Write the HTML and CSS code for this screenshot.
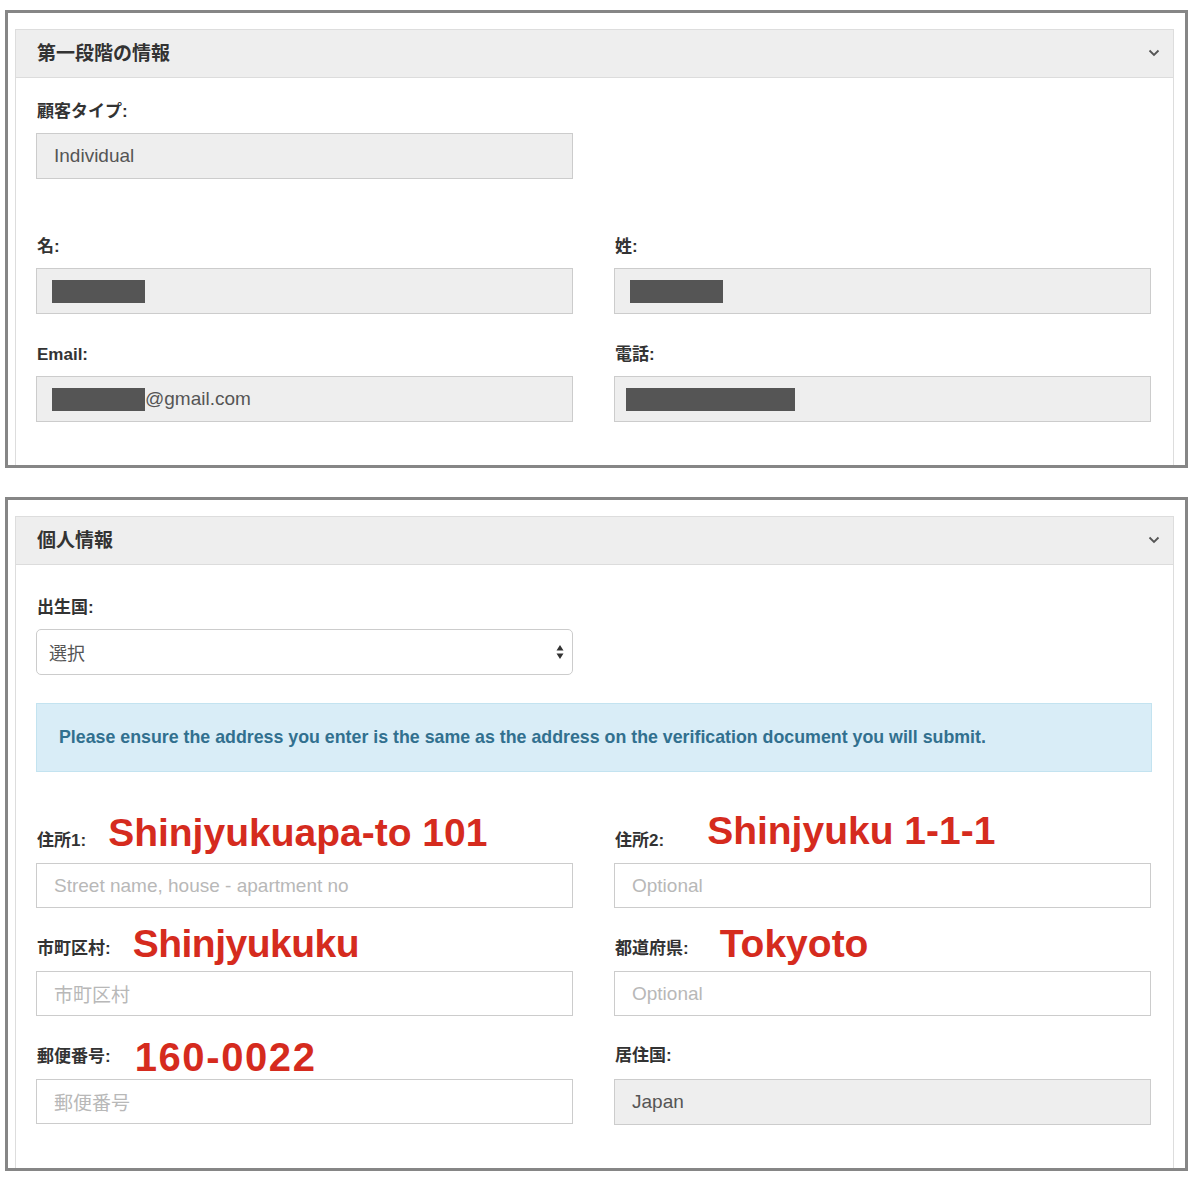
FILE: index.html
```html
<!DOCTYPE html>
<html lang="ja">
<head>
<meta charset="utf-8">
<link rel="stylesheet" href="styles.css">
</head>
<body>
<div class="page">
  <div class="frame frame-1">
    <div class="panel">
      <div class="panel-head">
        <span class="panel-title">第一段階の情報</span>
        <svg class="chev" width="12" height="8" viewBox="0 0 12 8"><path d="M1.5 1.5 L6 6 L10.5 1.5" fill="none" stroke="#555" stroke-width="1.8"/></svg>
      </div>
      <div class="panel-body body-1">
        <div class="grid">
          <div class="group group-first">
            <div class="label">顧客タイプ:</div>
            <div class="field readonly">Individual</div>
          </div>
          <div></div>
          <div class="group">
            <div class="label">名:</div>
            <div class="field readonly"><span class="redact redact-a"></span></div>
          </div>
          <div class="group">
            <div class="label">姓:</div>
            <div class="field readonly"><span class="redact redact-a"></span></div>
          </div>
          <div class="group">
            <div class="label">Email:</div>
            <div class="field readonly"><span class="redact redact-a"></span>@gmail.com</div>
          </div>
          <div class="group">
            <div class="label">電話:</div>
            <div class="field readonly"><span class="redact redact-b"></span></div>
          </div>
        </div>
      </div>
    </div>
  </div>

  <div class="frame frame-2">
    <div class="panel">
      <div class="panel-head">
        <span class="panel-title">個人情報</span>
        <svg class="chev" width="12" height="8" viewBox="0 0 12 8"><path d="M1.5 1.5 L6 6 L10.5 1.5" fill="none" stroke="#555" stroke-width="1.8"/></svg>
      </div>
      <div class="panel-body body-2">
        <div class="group half">
          <div class="label">出生国:</div>
          <div class="field select">
            <span>選択</span>
            <svg class="updown" width="8" height="16" viewBox="0 0 8 16"><path d="M4 1 L7.5 6.5 L0.5 6.5 Z M4 15 L7.5 9.5 L0.5 9.5 Z" fill="#333"/></svg>
          </div>
        </div>
        <div class="alert">Please ensure the address you enter is the same as the address on the verification document you will submit.</div>
        <div class="addr-grid">
          <div class="agroup">
            <div class="arow"><span class="slabel">住所1:</span><span class="red red-1">Shinjyukuapa-to 101</span></div>
            <div class="field plain ph">Street name, house - apartment no</div>
          </div>
          <div class="agroup">
            <div class="arow"><span class="slabel">住所2:</span><span class="red red-2">Shinjyuku 1-1-1</span></div>
            <div class="field plain ph">Optional</div>
          </div>
          <div class="agroup">
            <div class="arow"><span class="slabel">市町区村:</span><span class="red red-3">Shinjyukuku</span></div>
            <div class="field plain ph">市町区村</div>
          </div>
          <div class="agroup">
            <div class="arow"><span class="slabel">都道府県:</span><span class="red red-4">Tokyoto</span></div>
            <div class="field plain ph">Optional</div>
          </div>
          <div class="agroup">
            <div class="arow"><span class="slabel">郵便番号:</span><span class="red red-5">160-0022</span></div>
            <div class="field plain ph">郵便番号</div>
          </div>
          <div class="agroup">
            <div class="arow"><span class="label inline">居住国:</span></div>
            <div class="field readonly">Japan</div>
          </div>
        </div>
      </div>
    </div>
  </div>
</div>
</body>
</html>
```

FILE: styles.css
```css
html, body {
  margin: 0;
  padding: 0;
  background: #ffffff;
}
body {
  font-family: "Liberation Sans", Arial, "Noto Sans CJK JP", sans-serif;
  color: #333;
}
.page {
  padding: 10px 0 0 5px;
}
.frame {
  width: 1159px;
  border: 3px solid #868686;
  padding: 16px 11px 0 7px;
  overflow: hidden;
  background: #fff;
}
.frame-1 {
  height: 436px;
}
.frame-2 {
  margin-top: 29px;
  height: 652px;
}
.panel {
  border: 1px solid #dddddd;
  border-bottom: none;
  height: 100%;
}
.panel-head {
  box-sizing: border-box;
  height: 48px;
  background: #eeeeee;
  border-bottom: 1px solid #dcdcdc;
  display: flex;
  align-items: center;
  justify-content: space-between;
  padding: 0 13px 5px 21px;
}
.panel-title {
  font-size: 19px;
  font-weight: bold;
  color: #333;
}
.chev {
  display: block;
  margin-top: 4px;
}
.panel-body {
  padding: 0 21px 0 20px;
}
.body-1 {
  padding-top: 24px;
}
.body-2 {
  padding-top: 33px;
}
.grid {
  display: grid;
  grid-template-columns: 537px 537px;
  column-gap: 41px;
}
.group {
  margin-bottom: 31px;
}
.group-first {
  margin-bottom: 58px;
}
.label {
  font-size: 17px;
  font-weight: bold;
  line-height: 20px;
  height: 20px;
  margin-bottom: 11px;
  padding-left: 1px;
  color: #333;
}
.field {
  box-sizing: border-box;
  height: 46px;
  border: 1px solid #cccccc;
  display: flex;
  align-items: center;
  padding: 0 17px;
  font-size: 19px;
  color: #555;
}
.readonly {
  background: #eeeeee;
}
.plain {
  background: #fff;
  height: 45px;
}
.ph {
  color: #b8b8b8;
}
.redact {
  display: inline-block;
  height: 23px;
  background: #555555;
  margin-left: -2px;
}
.redact-a {
  width: 93px;
}
.redact-b {
  width: 169px;
  margin-left: -6px;
}
.half {
  width: 537px;
  margin-bottom: 28px;
}
.select {
  background: #fff;
  border-radius: 5px;
  justify-content: space-between;
  padding: 0 8px 0 12px;
  color: #555;
  font-size: 18px;
  height: 46px;
}
.updown {
  display: block;
}
.alert {
  box-sizing: border-box;
  height: 69px;
  background: #d9edf7;
  border: 1px solid #c3e3f0;
  color: #31708f;
  font-weight: bold;
  font-size: 17.8px;
  display: flex;
  align-items: center;
  padding: 0 22px;
}
.addr-grid {
  display: grid;
  grid-template-columns: 537px 537px;
  column-gap: 41px;
  row-gap: 11px;
  margin-top: 39px;
}
.arow {
  height: 52px;
  display: flex;
  align-items: flex-end;
  white-space: nowrap;
}
.slabel {
  font-size: 17px;
  line-height: 20px;
  font-weight: bold;
  color: #333;
  padding-left: 1px;
  margin-bottom: 12px;
}
.label.inline {
  margin-bottom: 13px;
}
.red {
  color: #d52b1e;
  font-weight: bold;
  font-size: 39px;
  line-height: 40px;
}
.red-1 { margin-left: 22px; margin-bottom: 10px; }
.red-2 { margin-left: 43px; margin-bottom: 12px; }
.red-3 { margin-left: 22px; margin-bottom: 7px; letter-spacing: -0.5px; }
.red-4 { margin-left: 31px; margin-bottom: 7px; }
.red-5 { margin-left: 24px; margin-bottom: 2px; font-size: 40px; letter-spacing: 1.6px; }
```
